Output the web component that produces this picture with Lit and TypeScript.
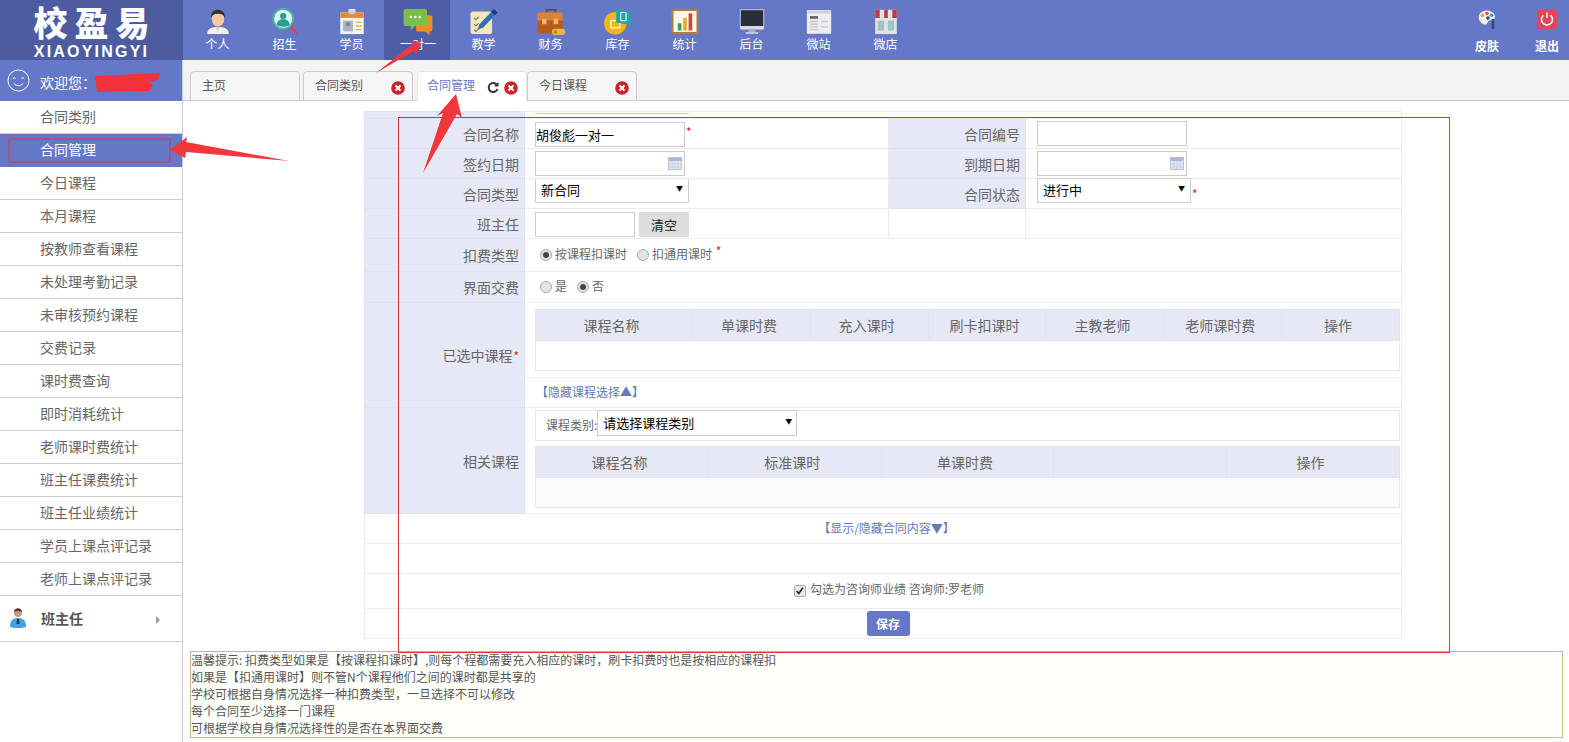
import { LitElement, css, html } from 'lit';
import { customElement } from 'lit/decorators.js';

const icons: Record<string, unknown> = {
  person: html`<svg viewBox="0 0 32 30"><path d="M4 29c0-6 5-8 12-8s12 2 12 8z" fill="#f4f1ea"/><path d="M13 21l3 5 3-5z" fill="#cfd6dc"/><ellipse cx="16" cy="12" rx="7" ry="8.500" fill="#f2c9a2"/><path d="M8.500 11c-1-7 4-9 7.500-9s8.500 2 7.500 9c-1-3-3-4.500-7.500-4.500S9.500 8 8.500 11z" fill="#33302e"/></svg>`,
  recruit: html`<svg viewBox="0 0 32 30"><path d="M20 19l8 8" stroke="#d9415a" stroke-width="3.500" stroke-linecap="round"/><circle cx="14" cy="12" r="11" fill="#dff4ef" stroke="#49b7a5" stroke-width="2"/><circle cx="14" cy="9" r="3.500" fill="#2f9c8c"/><path d="M7 19c0-5 3-6.500 7-6.500s7 1.500 7 6.500c-3 2.500-10 2.500-14 0z" fill="#2f9c8c"/></svg>`,
  student: html`<svg viewBox="0 0 32 30"><rect x="12" y="1" width="8" height="7" rx="1" fill="#e6e6e6"/><rect x="3" y="5" width="26" height="24" fill="#f5f6f8"/><rect x="3" y="5" width="26" height="6" fill="#e8882f"/><rect x="13" y="3" width="6" height="4" fill="#c9ced6"/><rect x="6" y="14" width="11" height="12" fill="#aab4c4"/><circle cx="11.500" cy="18" r="2.500" fill="#7c8aa0"/><path d="M20 16h7M20 20h7M20 24h7" stroke="#e9b64c" stroke-width="1.500"/></svg>`,
  talk: html`<svg viewBox="0 0 32 30"><path d="M14 8h16q2 0 2 2v14q0 2-2 2h-1v4l-5-4H14z" fill="#ee8f24"/><path d="M2 1h22q2 0 2 2v15q0 2-2 2H12l-4 5v-5H2q-2 0-2-2V3q0-2 2-2z" fill="#7cc04b"/><circle cx="8" cy="10" r="1.400" fill="#fff"/><circle cx="13" cy="10" r="1.400" fill="#fff"/><circle cx="18" cy="10" r="1.400" fill="#fff"/></svg>`,
  teach: html`<svg viewBox="0 0 32 30"><rect x="1" y="4" width="24" height="25" rx="3" fill="#f3e7b5"/><path d="M5 11l2 2 3-3M5 18l2 2 3-3M5 24l2 2 3-3" stroke="#777" stroke-width="1.300" fill="none"/><path d="M27 1l4 4-16 17-6 2 2-6z" fill="#2c6fb7"/><path d="M27 1l4 4-3 3-4-4z" fill="#1c3f70"/></svg>`,
  finance: html`<svg viewBox="0 0 32 30"><path d="M11 5V2h10v3" stroke="#7e4a1c" stroke-width="2" fill="none"/><rect x="1" y="5" width="28" height="10" rx="2" fill="#e0813a"/><rect x="1" y="14" width="28" height="14" rx="1" fill="#b65a1e"/><rect x="6" y="12" width="5" height="6" fill="#f0b26d"/><rect x="19" y="12" width="5" height="6" fill="#f0b26d"/><rect x="17" y="23" width="15" height="7" rx="3.500" fill="#edb64a"/><circle cx="21" cy="26.500" r="2" fill="#b98124"/></svg>`,
  stock: html`<svg viewBox="0 0 32 30"><circle cx="13" cy="17" r="12.500" fill="#f7b614"/><rect x="8" y="14" width="10" height="8" fill="none" stroke="#fff" stroke-width="1.300"/><path d="M14 1l17 5-2 13-15-3z" fill="#20a99a"/><rect x="19" y="5" width="6" height="9" rx="1" fill="none" stroke="#dff" stroke-width="1.300"/></svg>`,
  stats: html`<svg viewBox="0 0 32 30"><rect x="2" y="2" width="28" height="26" rx="2" fill="#fbf7ea" stroke="#a9803e" stroke-width="2.500"/><rect x="8" y="17" width="4" height="8" fill="#36a34a"/><rect x="14" y="11" width="4" height="14" fill="#eda52a"/><rect x="20" y="6" width="4" height="19" fill="#dc3f3f"/></svg>`,
  screen: html`<svg viewBox="0 0 32 30"><rect x="3" y="2" width="26" height="19" fill="#2a2b3a" stroke="#d0d3d8" stroke-width="1"/><rect x="3" y="20" width="26" height="4" fill="#d8dadf"/><rect x="12" y="24" width="8" height="3" fill="#a9adb5"/><rect x="9" y="27" width="14" height="1.500" fill="#e8e9ec"/></svg>`,
  site: html`<svg viewBox="0 0 32 30"><rect x="3" y="3" width="26" height="25" fill="#eceded" stroke="#f8f8f8"/><rect x="3" y="3" width="26" height="3" fill="#cfd1d3"/><rect x="6" y="9" width="9" height="3" fill="#666"/><path d="M6 15h9M6 18h9M6 21h9M6 24h9M18 15h8M18 21h8" stroke="#c4c6c8" stroke-width="1.500"/></svg>`,
  shop: html`<svg viewBox="0 0 32 30"><rect x="4" y="2" width="24" height="27" fill="#dfe3e6"/><path d="M4 2h5v9H4zM14 2h4v9h-4zM23 2h5v9h-5z" fill="#bf3a3f"/><rect x="7" y="14" width="7" height="11" fill="#9fc4c4"/><rect x="18" y="14" width="7" height="11" fill="#9fc4c4"/></svg>`,
  skin: html`<svg viewBox="0 0 24 24"><path d="M3 10C3 5 9 2 14 3s8 5 6 9c-1 2-4 1-6 2s-1 5-5 4c-3-1-6-4-6-8z" fill="#eef0f5"/><circle cx="7" cy="8" r="2" fill="#eda52a"/><circle cx="12" cy="6" r="2" fill="#e2574c"/><circle cx="17" cy="8" r="2" fill="#2fa3d9"/><circle cx="13" cy="11" r="2" fill="#3c4a6b"/><rect x="17" y="12" width="3" height="11" fill="#3c4a6b"/></svg>`,
  exit: html`<svg viewBox="0 0 24 24"><rect x="1" y="1" width="22" height="22" rx="4" fill="#e0475b"/><path d="M8 8a6 6 0 1 0 8 0" fill="none" stroke="#fff" stroke-width="1.600"/><path d="M12 5v6" stroke="#fff" stroke-width="1.600"/></svg>`,
};

const navItems = [
  ['个人', 'person'], ['招生', 'recruit'], ['学员', 'student'], ['一对一', 'talk'], ['教学', 'teach'], ['财务', 'finance'],
  ['库存', 'stock'], ['统计', 'stats'], ['后台', 'screen'], ['微站', 'site'], ['微店', 'shop'],
];

const menuItems = [
  '合同类别', '合同管理', '今日课程', '本月课程', '按教师查看课程', '未处理考勤记录', '未审核预约课程', '交费记录',
  '课时费查询', '即时消耗统计', '老师课时费统计', '班主任课费统计', '班主任业绩统计', '学员上课点评记录', '老师上课点评记录',
];

const tabs = ['主页', '合同类别', '合同管理', '今日课程'];

const tips = [
  '温馨提示: 扣费类型如果是【按课程扣课时】,则每个程都需要充入相应的课时，刷卡扣费时也是按相应的课程扣',
  '如果是【扣通用课时】则不管N个课程他们之间的课时都是共享的',
  '学校可根据自身情况选择一种扣费类型，一旦选择不可以修改',
  '每个合同至少选择一门课程',
  '可根据学校自身情况选择性的是否在本界面交费',
];

const calendar = html`<svg class="cal" viewBox="0 0 14 13"><rect x=".5" y=".5" width="13" height="12" fill="#e4e9f4" stroke="#b9c3d8"/><rect x="1" y="1" width="12" height="3" fill="#a9b7d4"/><path d="M1 7h12M1 10h12M4 4v8M7 4v8M10 4v8" stroke="#c2cbdd" stroke-width=".8"/></svg>`;

const closeIcon = html`<svg class="close" viewBox="0 0 14 14"><circle cx="7" cy="7" r="6.800" fill="#c9232d"/><path d="M4.500 4.500l5 5M9.500 4.500l-5 5" stroke="#fff" stroke-width="2"/></svg>`;

@customElement('app-root')
export class AppRoot extends LitElement {
  static styles = css`
    :host {
      display: block;
      position: relative;
      height: 742px;
      overflow: hidden;
      background: #fff;
      color: #666;
      font-family: 'Noto Sans CJK SC', 'Liberation Sans', sans-serif;
      font-size: 14px;
    }

    .top {
      display: flex;
      height: 60px;
      background: #6578c8;
      color: #fff;
    }
    .logo {
      width: 183px;
      height: 60px;
      box-sizing: border-box;
      padding-top: 5px;
      background: #4c5c9f;
      text-align: center;
      font-weight: 900;
      flex: none;
      overflow: hidden;
    }
    .logo-cn {
      font-family: 'Liberation Sans', 'Noto Sans CJK SC', sans-serif;
      font-size: 34px;
      line-height: 39px;
      letter-spacing: 7px;
      height: 39px;
      margin-left: 7px;
    }
    .logo-en {
      font-family: 'Liberation Sans', sans-serif;
      font-weight: 700;
      font-size: 16px;
      line-height: 16px;
      letter-spacing: 2.200px;
    }
    .nav {
      display: flex;
      flex: 1;
      padding-left: 1px;
    }
    .nav-item {
      width: 67px;
      height: 60px;
      box-sizing: border-box;
      padding-top: 8px;
      text-align: center;
      font-size: 12px;
      line-height: 18px;
    }
    .nav-item.on {
      width: 66px;
      margin-left: -1px;
      padding-left: 2px;
      background: #4d5ea6;
    }
    .nav-item svg {
      display: block;
      width: 32px;
      height: 27px;
      margin: 0 auto;
    }
    .top-right {
      display: flex;
      gap: 16px;
    }
    .tool {
      width: 44px;
      padding-top: 8px;
      text-align: center;
      font-size: 12px;
      font-weight: 700;
      line-height: 18px;
    }
    .tool svg {
      display: block;
      width: 22px;
      height: 22px;
      margin: 0 auto 7px;
    }

    .body {
      display: flex;
      height: 682px;
    }
    .side {
      width: 183px;
      flex: none;
      box-sizing: border-box;
      border-right: 1px solid #ccc;
    }
    .welcome {
      display: flex;
      align-items: center;
      gap: 10px;
      height: 41px;
      padding-left: 7px;
      background: #6578c8;
      color: #fff;
    }
    .welcome span {
      margin-top: 2px;
    }
    .welcome svg {
      width: 23px;
      height: 23px;
    }
    .menu-item {
      height: 33px;
      box-sizing: border-box;
      border-bottom: 1px solid #ccc;
      padding-left: 40px;
      line-height: 30px;
    }
    .menu-item.on {
      background: #6578c8;
      color: #fff;
      border-bottom-color: #6578c8;
    }
    .menu-group {
      display: flex;
      align-items: center;
      height: 46px;
      box-sizing: border-box;
      border-bottom: 1px solid #ccc;
      padding: 0 22px 2px 9px;
      font-weight: 700;
      color: #555;
    }
    .menu-group svg {
      width: 18px;
      height: 20px;
      margin-right: 14px;
    }
    .menu-group span {
      flex: 1;
    }
    .caret {
      border-left: 4px solid #999;
      border-top: 4px solid transparent;
      border-bottom: 4px solid transparent;
      margin-top: 5px;
    }

    .main {
      flex: 1;
      min-width: 0;
    }
    .tabs {
      display: flex;
      align-items: flex-end;
      height: 41px;
      box-sizing: border-box;
      background: #f3f3f3;
      border-bottom: 1px solid #ccc;
      padding-left: 7px;
    }
    .tab {
      display: flex;
      align-items: center;
      width: 110px;
      height: 30px;
      box-sizing: border-box;
      margin-right: 3px;
      margin-bottom: -1px;
      padding: 0 7px 0 11px;
      background: #f5f5f5;
      border: 1px solid #ccc;
      border-radius: 4px 4px 0 0;
      font-size: 12px;
      color: #555;
    }
    .tab span {
      flex: 1;
      margin-top: -3px;
    }
    .tab.on {
      background: #fff;
      border-color: #e6e6e6;
      border-bottom-color: #fff;
      color: #6578c8;
      margin-left: 1px;
      margin-right: 0;
      padding: 0 8px 0 9px;
    }
    .close {
      width: 14px;
      height: 14px;
      flex: none;
      margin-top: 4px;
    }
    .refresh {
      width: 12px;
      height: 12px;
      margin-right: 5px;
      margin-top: 2px;
    }

    .form {
      width: 1037px;
      margin: 10px 0 0 181px;
      border-collapse: collapse;
      table-layout: fixed;
    }
    .form > tbody > tr > td {
      border: 1px solid #ebebeb;
      padding: 0 0 0 10px;
      vertical-align: middle;
    }
    .form > tbody > tr > td.label {
      background: #e6e9f5;
      border-color: #dee1ee;
      padding: 0 5px 0 0;
      text-align: right;
    }
    .form > tbody > tr > td.pad11 {
      padding-left: 11px;
    }
    .form > tbody > tr > td.hi {
      vertical-align: top;
    }
    .form > tbody > tr > td.courses {
      vertical-align: top;
      padding-top: 2px;
    }
    .r0 { height: 7px; }
    .r0 td { line-height: 0; vertical-align: top !important; }
    .stub {
      width: 154px;
      height: 1px;
      border-bottom: 1px solid #ccc;
    }
    .r30 { height: 30px; }
    .r31 { height: 31px; }
    .r33 { height: 33px; }
    .r35 { height: 35px; }
    .r75 { height: 75px; }
    .r106 { height: 106px; }

    .cell {
      display: flex;
      align-items: center;
    }
    .drop {
      margin-top: 2px;
    }
    .input {
      display: flex;
      align-items: center;
      justify-content: flex-end;
      width: 150px;
      height: 25px;
      box-sizing: border-box;
      border: 1px solid #ccc;
      background: #fff;
      color: #000;
      font-size: 13px;
      padding: 0 2px 0 0;
    }
    .input.text {
      justify-content: flex-start;
    }
    .input.short {
      width: 100px;
    }
    .cal {
      width: 14px;
      height: 13px;
    }
    .req {
      color: #e02020;
      font-size: 12px;
      margin: -6px 0 0 1px;
    }
    .req.low {
      margin-top: 4px;
    }
    .select {
      display: flex;
      align-items: center;
      justify-content: space-between;
      width: 154px;
      height: 25px;
      box-sizing: border-box;
      border: 1px solid #ccc;
      background: #fff;
      color: #000;
      font-size: 13px;
      padding: 0 5px;
    }
    .hi .select {
      margin-top: -1px;
      padding-bottom: 2px;
    }
    .select i {
      font-style: normal;
      font-size: 7px;
      margin-top: -4px;
    }
    .btn {
      width: 50px;
      height: 25px;
      margin-left: 4px;
      background: #ddd;
      color: #222;
      font-size: 13px;
      line-height: 26px;
      text-align: center;
    }
    .radios {
      display: flex;
      align-items: center;
      font-size: 12px;
      line-height: 18px;
      color: #666;
      margin-top: -3px;
    }
    .radio {
      width: 12px;
      height: 12px;
      box-sizing: border-box;
      border: 1px solid #aaa;
      border-radius: 50%;
      background: #e4e4e4;
      margin: 3px 3px 0 5px;
      display: flex;
      align-items: center;
      justify-content: center;
    }
    .radio.on::after {
      content: '';
      width: 6px;
      height: 6px;
      border-radius: 50%;
      background: #444;
    }
    .gap {
      margin-right: 5px;
    }

    .inner {
      width: 865px;
      border-collapse: collapse;
      table-layout: fixed;
    }
    .inner th, .inner td {
      box-sizing: border-box;
      border: 1px solid #e0e3ee;
      padding: 0;
      font-weight: 400;
      text-align: center;
      font-size: 14px;
      color: #666;
    }
    .inner th {
      height: 31px;
      padding-right: 5px;
      background: #e6e9f5;
    }
    .inner td {
      height: 30px;
      border-color: #e8e8e8;
    }
    .inner .wide {
      width: 157px;
    }
    .inner.alt td {
      background: #fafafa;
    }
    .link {
      display: block;
      color: #6578b8;
      font-size: 12px;
      padding-left: 1px;
      margin-top: -2px;
    }
    .center {
      text-align: center;
      padding-left: 0 !important;
    }
    .form > tbody > tr > td.center.link-row {
      padding-left: 6px !important;
    }
    .form > tbody > tr > td.center.agree-row {
      padding: 0 0 6px 12px !important;
    }
    .form > tbody > tr > td.center.save-row {
      padding-left: 10px !important;
    }
    .filter {
      display: flex;
      align-items: flex-start;
      width: 865px;
      height: 31px;
      box-sizing: border-box;
      border: 1px solid #e8e8e8;
      padding-left: 10px;
      font-size: 12px;
      line-height: 28px;
      margin-bottom: 5px;
    }
    .filter .select {
      width: 200px;
      height: 26px;
      margin-top: -1px;
      padding-right: 4px;
      line-height: 20px;
    }
    .check {
      display: inline-flex;
      vertical-align: -2px;
      width: 12px;
      height: 12px;
      box-sizing: border-box;
      border: 1px solid #aaa;
      border-radius: 2px;
      background: #e8e8e8;
      margin-right: 4px;
    }
    .agree {
      font-size: 12px;
      color: #666;
    }
    .save {
      display: inline-block;
      width: 43px;
      height: 25px;
      border-radius: 3px;
      background: #6578c8;
      color: #fff;
      font-size: 12px;
      font-weight: 700;
      line-height: 25px;
      vertical-align: middle;
    }

    .tip {
      margin: 12px 6px 0 7px;
      height: 87px;
      box-sizing: border-box;
      border: 1px solid #c8b67f;
      background: #fffffc;
      font-size: 12px;
      line-height: 17px;
      color: #555;
      white-space: nowrap;
    }
    .tip-lines {
      margin-top: -1px;
    }

    .marks {
      position: absolute;
      top: 0;
      left: 0;
      width: 1569px;
      height: 742px;
      pointer-events: none;
    }
  `;

  private renderTab(name: string, i: number) {
    return html`<div class="tab ${i === 2 ? 'on' : ''}">
      <span>${name}</span>
      ${i === 2
        ? html`<svg class="refresh" viewBox="0 0 12 12"><path d="M10 4A4.500 4.500 0 1 0 10.500 8" fill="none" stroke="#333" stroke-width="2"/><path d="M11.500 1v4.500H7z" fill="#333"/></svg>`
        : ''}
      ${i > 0 ? closeIcon : ''}
    </div>`;
  }

  render() {
    return html`
      <header class="top">
        <div class="logo">
          <div class="logo-cn">校盈易</div>
          <div class="logo-en">XIAOYINGYI</div>
        </div>
        <nav class="nav">
          ${navItems.map(
            ([label, icon], i) => html`<div class="nav-item ${i === 3 ? 'on' : ''}">${icons[icon]}${label}</div>`,
          )}
        </nav>
        <div class="top-right">
          <div class="tool">${icons.skin}皮肤</div>
          <div class="tool">${icons.exit}退出</div>
        </div>
      </header>
      <div class="body">
        <aside class="side">
          <div class="welcome">
            <svg viewBox="0 0 24 24"><circle cx="12" cy="12" r="11" fill="none" stroke="#fff"/><path d="M6 10q1.500-2 3 0M15 10q1.500-2 3 0M7 15q5 5 10 0" fill="none" stroke="#fff"/></svg>
            <span>欢迎您：</span>
          </div>
          ${menuItems.map((m, i) => html`<div class="menu-item ${i === 1 ? 'on' : ''}">${m}</div>`)}
          <div class="menu-group">
            <svg viewBox="0 0 18 20"><path d="M1 19c0-7 3-9 8-9s8 2 8 9c-4 1.500-12 1.500-16 0z" fill="#3ea5df"/><circle cx="9" cy="5" r="4" fill="#c99a7b"/><path d="M5 4c0-5 8-5 8 0-2-1.500-6-1.500-8 0z" fill="#4a3a30"/><path d="M8 11h2l.5 5h-3z" fill="#234"/></svg>
            <span>班主任</span>
            <i class="caret"></i>
          </div>
        </aside>
        <main class="main">
          <div class="tabs">${tabs.map((t, i) => this.renderTab(t, i))}</div>
          <table class="form">
            <colgroup>
              <col style="width:160px" /><col style="width:364px" /><col style="width:137px" /><col style="width:376px" />
            </colgroup>
            <tbody>
              <tr class="r0">
                <td class="label"></td>
                <td colspan="3"><div class="stub"></div></td>
              </tr>
              <tr class="r30">
                <td class="label">合同名称</td>
                <td><div class="cell drop"><div class="input text">胡俊彪一对一</div><span class="req">*</span></div></td>
                <td class="label">合同编号</td>
                <td class="pad11"><div class="input"></div></td>
              </tr>
              <tr class="r30">
                <td class="label">签约日期</td>
                <td><div class="input">${calendar}</div></td>
                <td class="label">到期日期</td>
                <td class="pad11"><div class="input">${calendar}</div></td>
              </tr>
              <tr class="r30">
                <td class="label">合同类型</td>
                <td class="hi"><div class="select">新合同<i>▼</i></div></td>
                <td class="label">合同状态</td>
                <td class="hi pad11"><div class="cell"><div class="select">进行中<i>▼</i></div><span class="req low">*</span></div></td>
              </tr>
              <tr class="r30">
                <td class="label">班主任</td>
                <td><div class="cell drop"><div class="input short"></div><div class="btn">清空</div></div></td>
                <td></td>
                <td></td>
              </tr>
              <tr class="r33">
                <td class="label">扣费类型</td>
                <td colspan="3">
                  <div class="radios"><i class="radio on"></i><span class="gap">按课程扣课时</span><i class="radio"></i><span>扣通用课时</span><span class="req">&nbsp;*</span></div>
                </td>
              </tr>
              <tr class="r31">
                <td class="label">界面交费</td>
                <td colspan="3">
                  <div class="radios"><i class="radio"></i><span class="gap">是</span><i class="radio on"></i><span>否</span></div>
                </td>
              </tr>
              <tr class="r75">
                <td class="label" rowspan="2">已选中课程<span class="req">*</span></td>
                <td colspan="3">
                  <table class="inner">
                    <tr><th class="wide">课程名称</th><th>单课时费</th><th>充入课时</th><th>刷卡扣课时</th><th>主教老师</th><th>老师课时费</th><th>操作</th></tr>
                    <tr><td colspan="7"></td></tr>
                  </table>
                </td>
              </tr>
              <tr class="r30">
                <td colspan="3"><span class="link">【隐藏课程选择▲】</span></td>
              </tr>
              <tr class="r106">
                <td class="label">相关课程</td>
                <td class="courses" colspan="3">
                  <div class="filter">课程类别:<div class="select">请选择课程类别<i>▼</i></div></div>
                  <table class="inner alt">
                    <tr><th>课程名称</th><th>标准课时</th><th>单课时费</th><th></th><th>操作</th></tr>
                    <tr><td colspan="5"></td></tr>
                  </table>
                </td>
              </tr>
              <tr class="r30"><td colspan="4" class="center link-row"><span class="link">【显示/隐藏合同内容▼】</span></td></tr>
              <tr class="r30"><td colspan="4"></td></tr>
              <tr class="r35">
                <td colspan="4" class="center agree-row">
                  <span class="agree"><i class="check"><svg viewBox="0 0 12 12"><path d="M2 6l2.500 3L9.500 2" fill="none" stroke="#222" stroke-width="2"/></svg></i>勾选为咨询师业绩 咨询师:罗老师</span>
                </td>
              </tr>
              <tr class="r30"><td colspan="4" class="center save-row"><span class="save">保存</span></td></tr>
            </tbody>
          </table>
          <div class="tip"><div class="tip-lines">${tips.map((t) => html`<div>${t}</div>`)}</div></div>
        </main>
      </div>
      <svg class="marks" viewBox="0 0 1569 742">
        <path d="M95 76l66-3-4 7-8 2 4 3-4 6-52 1z" fill="#f2323a"/>
        <rect x="398.500" y="117.500" width="1051" height="535" fill="none" stroke="#d8353b"/>
        <rect x="9" y="139" width="161" height="23" fill="none" stroke="#d8353b"/>
        <path d="M376 73l38-30-2-3 9 3-5 12-2-4z" fill="#f0383c"/>
        <path d="M423 173l20-60-6 3 19-22 6 24-5-4z" fill="#f0383c"/>
        <path d="M289 161l-103-19 1-5-17 13 15 8 1-6z" fill="#f0383c"/>
      </svg>
    `;
  }
}

declare global {
  interface HTMLElementTagNameMap {
    'app-root': AppRoot;
  }
}
